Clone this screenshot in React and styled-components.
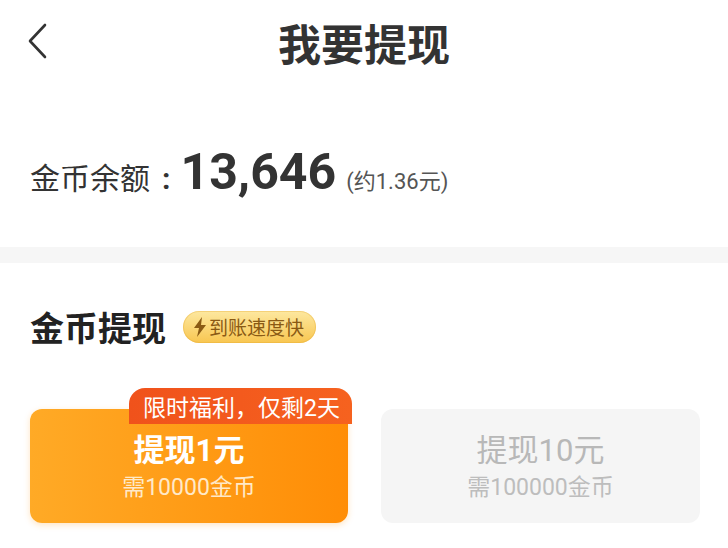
import React from "react";
import styled, { createGlobalStyle } from "styled-components";

const GlobalStyle = createGlobalStyle`
  body {
    margin: 0;
    background: #fff;
    font-family: Roboto, "Noto Sans CJK SC", sans-serif;
    color: #333;
  }
`;

const Page = styled.div`
  width: 728px;
  height: 548px;
  overflow: hidden;
  background: #fff;
`;

const NavBar = styled.div`
  height: 84px;
  display: grid;
  grid-template-columns: 1fr auto 1fr;
  align-items: center;
  padding: 0 28px;
`;

const Back = styled.button`
  justify-self: start;
  border: none;
  background: transparent;
  padding: 0;
  display: flex;
  margin-top: -2px;
  cursor: pointer;
`;

const Title = styled.h1`
  margin: 0;
  font-size: 43px;
  font-weight: 700;
  color: #333;
  line-height: 1;
  font-family: "Noto Sans CJK SC", sans-serif;
`;

const Balance = styled.div`
  height: 163px;
  box-sizing: border-box;
  padding: 63px 30px 0;
  display: flex;
  align-items: baseline;
`;

const BalanceLabel = styled.span`
  font-size: 30px;
  color: #333;
  font-family: "Noto Sans CJK SC", sans-serif;
`;

const Colon = styled.span`
  font-size: 30px;
  color: #333;
  margin: 0 10px 0 12px;
  font-weight: 700;
  font-family: Roboto, sans-serif;
`;

const Amount = styled.span`
  font-size: 50px;
  font-weight: 700;
  color: #333;
  line-height: 1;
  margin-right: 10px;
  font-family: Roboto, sans-serif;
`;

const Approx = styled.span`
  font-size: 22px;
  color: #555;
  font-family: Roboto, "Noto Sans CJK SC", sans-serif;
`;

const Divider = styled.div`
  height: 16px;
  background: #f6f6f6;
`;

const SectionHead = styled.div`
  display: flex;
  align-items: center;
  gap: 17px;
  padding: 45px 30px 0;
`;

const SectionTitle = styled.h2`
  margin: 0;
  font-size: 34px;
  font-weight: 700;
  color: #222;
  line-height: 1.1;
  font-family: "Noto Sans CJK SC", sans-serif;
`;

const Badge = styled.span`
  display: inline-flex;
  align-items: center;
  gap: 2px;
  height: 32px;
  padding: 0 12px 0 10px;
  border-radius: 16px;
  background: linear-gradient(180deg, #fde8a0 0%, #f8c650 100%);
  box-shadow: inset 0 0 0 1px rgba(230, 170, 50, 0.35);
  color: #8a5a14;
  font-size: 19px;
  font-family: "Noto Sans CJK SC", sans-serif;
`;

const Cards = styled.div`
  display: grid;
  grid-template-columns: 318px 319px;
  gap: 33px;
  padding: 0 28px 0 30px;
  margin-top: 64px;
`;

const Card = styled.div`
  position: relative;
  height: 114px;
  border-radius: 12px;
  display: flex;
  flex-direction: column;
  align-items: center;
  justify-content: center;
  gap: 6px;
  background: ${(p) =>
    p.$active ? "linear-gradient(90deg, #ffaa26 0%, #ff8d06 100%)" : "#f5f5f5"};
  box-shadow: ${(p) => (p.$active ? "0 2px 6px rgba(255, 150, 20, 0.25)" : "none")};
`;

const CardTitle = styled.div`
  font-size: 31px;
  line-height: 36px;
  font-weight: ${(p) => (p.$active ? 700 : 400)};
  color: ${(p) => (p.$active ? "#fff" : "#b8b8b8")};
  font-family: Roboto, "Noto Sans CJK SC", sans-serif;
  margin-top: 2px;
`;

const CardSub = styled.div`
  font-size: 23px;
  line-height: 26px;
  color: ${(p) => (p.$active ? "#ffe9c8" : "#bdbdbd")};
  font-family: Roboto, "Noto Sans CJK SC", sans-serif;
`;

const Tag = styled.span`
  position: absolute;
  top: -21px;
  right: -4px;
  height: 36px;
  padding: 0 12px 0 14px;
  display: flex;
  align-items: center;
  border-radius: 16px 16px 0 0;
  background: linear-gradient(90deg, #f0521b 0%, #f6621f 100%);
  color: #fff;
  font-size: 23px;
  white-space: nowrap;
  font-family: Roboto, "Noto Sans CJK SC", sans-serif;
`;

const App = () => {
  return (
    <Page>
      <GlobalStyle />
      <NavBar>
        <Back aria-label="back">
          <svg width="20" height="36" viewBox="0 0 20 36">
            <polyline
              points="17,2 2,18 17,34"
              fill="none"
              stroke="#333"
              strokeWidth="2.6"
              strokeLinecap="round"
              strokeLinejoin="round"
            />
          </svg>
        </Back>
        <Title>我要提现</Title>
        <span />
      </NavBar>

      <Balance>
        <BalanceLabel>金币余额</BalanceLabel>
        <Colon>:</Colon>
        <Amount>13,646</Amount>
        <Approx>(约1.36元)</Approx>
      </Balance>

      <Divider />

      <SectionHead>
        <SectionTitle>金币提现</SectionTitle>
        <Badge>
          <svg width="14" height="20" viewBox="0 0 14 20">
            <path d="M9 0 L1 11 H6 L4 20 L13 8 H8 Z" fill="#8a5a14" />
          </svg>
          到账速度快
        </Badge>
      </SectionHead>

      <Cards>
        <Card $active>
          <Tag>限时福利，仅剩2天</Tag>
          <CardTitle $active>提现1元</CardTitle>
          <CardSub $active>需10000金币</CardSub>
        </Card>
        <Card>
          <CardTitle>提现10元</CardTitle>
          <CardSub>需100000金币</CardSub>
        </Card>
      </Cards>
    </Page>
  );
};

export default App;
